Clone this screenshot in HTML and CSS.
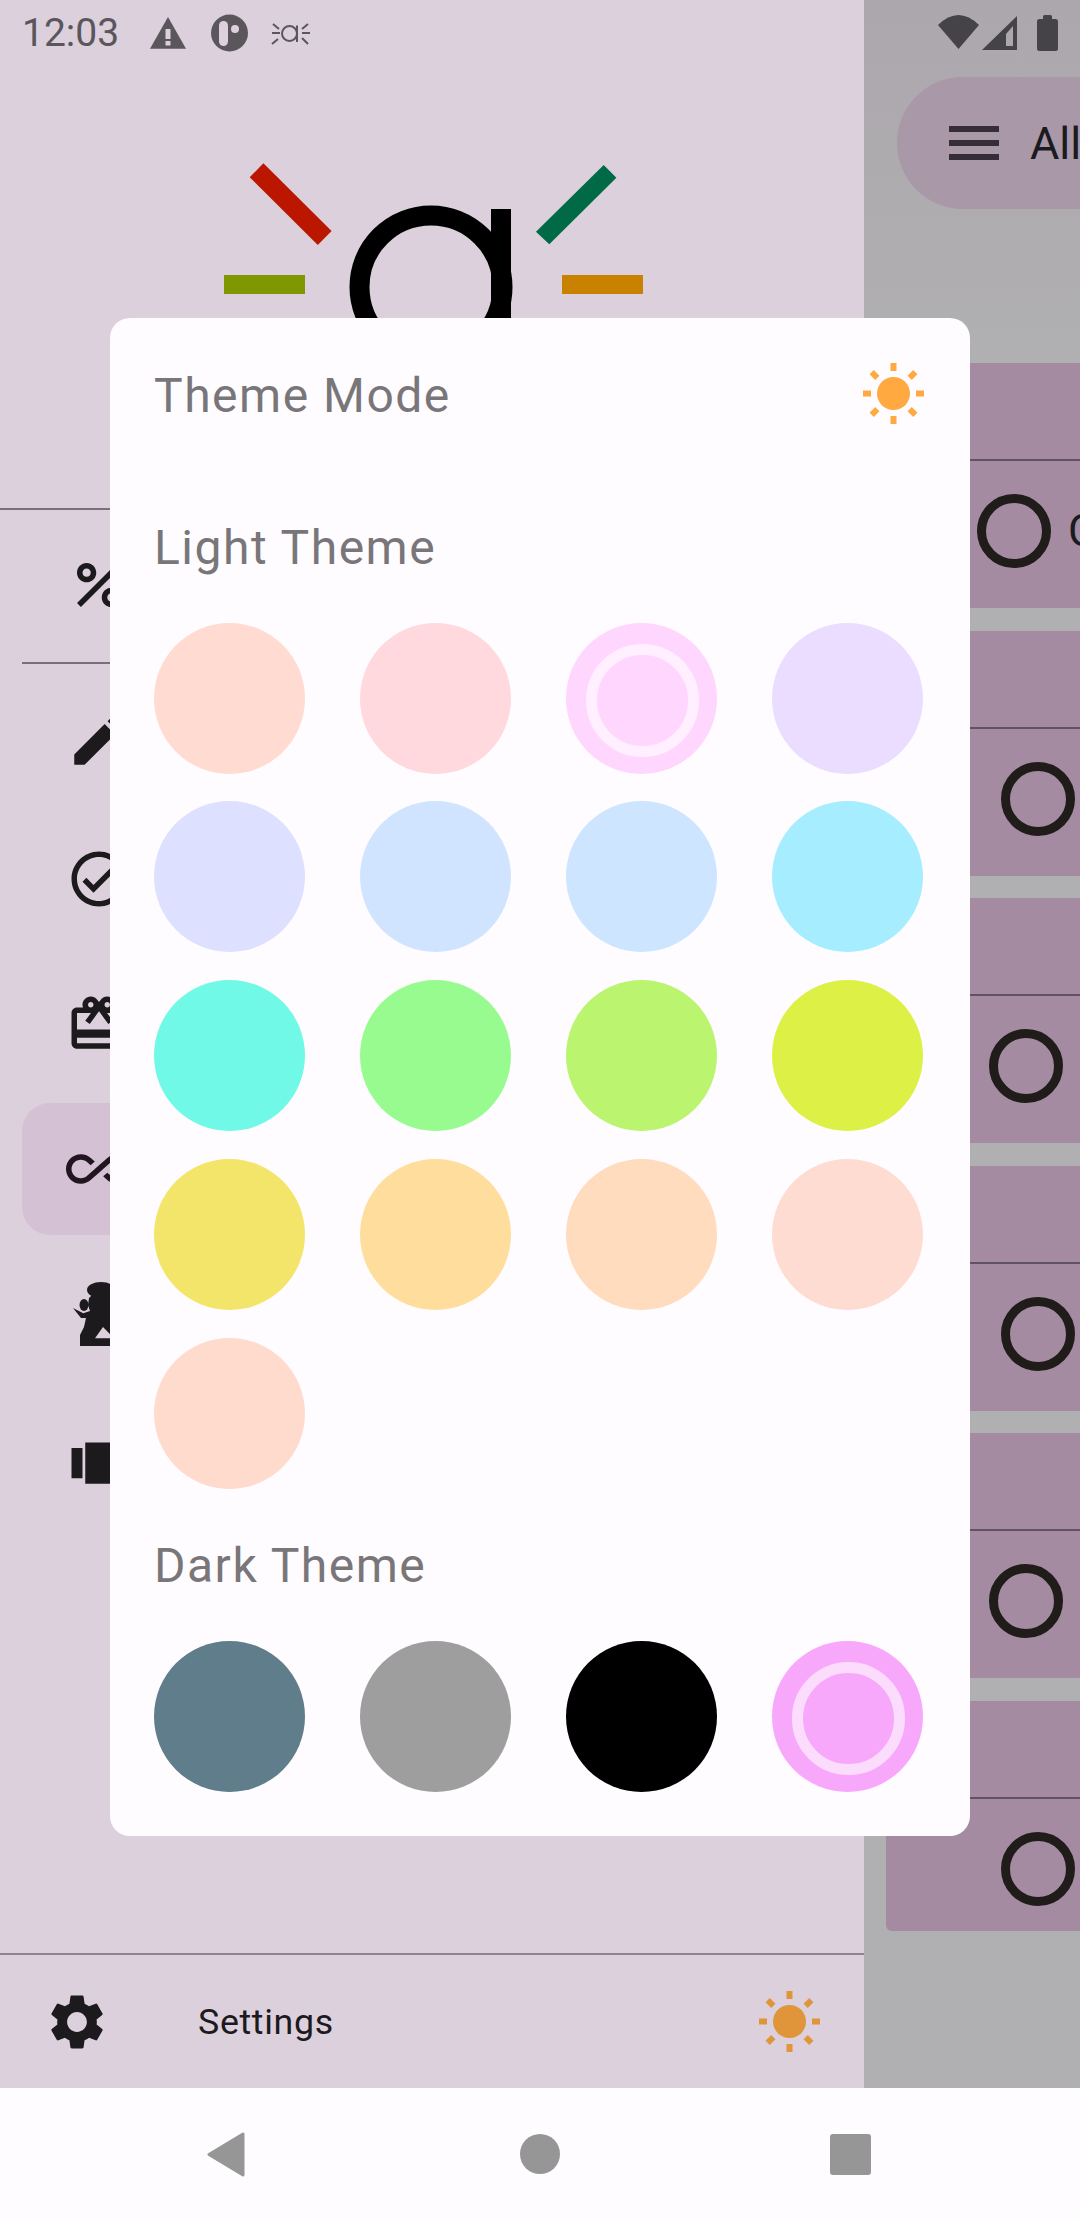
FILE: index.html
```html
<!DOCTYPE html>
<html lang="en">
<head>
  <meta charset="UTF-8" />
  <meta name="viewport" content="width=device-width, initial-scale=1.0"/>
  <title>Theme Mode</title>
  <link rel="stylesheet" href="styles.css">
</head>
<body>
  <svg class="defs" width="0" height="0">
    <symbol id="sun" viewBox="0 0 61 61">
      <circle cx="30.5" cy="30.5" r="16.5"/>
      <rect x="27.5" y="0" width="6" height="8"/>
      <rect x="27.5" y="53" width="6" height="8"/>
      <rect x="0" y="27.5" width="8" height="6"/>
      <rect x="53" y="27.5" width="8" height="6"/>
      <rect x="8.5" y="8" width="6" height="8" transform="rotate(-45 11.5 12)"/>
      <rect x="46.5" y="8" width="6" height="8" transform="rotate(45 49.5 12)"/>
      <rect x="8.5" y="45" width="6" height="8" transform="rotate(45 11.5 49)"/>
      <rect x="46.5" y="45" width="6" height="8" transform="rotate(-45 49.5 49)"/>
    </symbol>
  </svg>

  <div class="screen">
    <div class="app">
      <aside class="drawer">
        <div class="status-left">
          <span class="clock">12:03</span>
          <svg class="status-icons" width="164" height="44" viewBox="148 11 164 44">
            <path class="st-fill" d="M168 17 186 48.700H150Z" stroke-linejoin="round"/>
            <rect class="st-cut" x="165.500" y="29" width="5" height="10"/>
            <rect class="st-cut" x="165.500" y="41" width="5" height="4.500"/>
            <circle class="st-fill" cx="229.500" cy="33" r="18.500"/>
            <rect class="st-cut" x="219" y="21" width="9" height="25" rx="4.500"/>
            <circle class="st-cut" cx="235" cy="29" r="4"/>
            <g class="st-line">
              <circle cx="289.500" cy="33.500" r="7.500"/>
              <path d="M297 25.500V42M272 33h8M272 44l6-5M273 24l6 5M302 33h8M302 29l6-5M302 38l6 6"/>
            </g>
          </svg>
        </div>

        <div class="logo">
          <svg width="864" height="442" viewBox="0 66 864 442">
            <polygon fill="#bb1600" points="263.400,163.300 249.700,177.300 317.800,245 331.600,231"/>
            <polygon fill="#006a46" points="603.700,165 616.400,177.700 549.300,244.300 536,231.700"/>
            <rect fill="#7f9700" x="224" y="275" width="81" height="19"/>
            <rect fill="#c98200" x="562" y="275" width="81" height="19"/>
            <circle cx="431" cy="287" r="71.500" fill="none" stroke="#000" stroke-width="20"/>
            <rect x="491" y="209" width="20" height="160" fill="#000"/>
          </svg>
        </div>

        <div class="nav-top">
          <div class="nav-row">
            <svg class="nav-icon" viewBox="0 0 24 24"><path d="M7.500 11C9.430 11 11 9.430 11 7.500S9.430 4 7.500 4 4 5.570 4 7.500 5.570 11 7.500 11zm0-5C8.330 6 9 6.670 9 7.500S8.330 9 7.500 9 6 8.330 6 7.500 6.670 6 7.500 6zM4.003 18.588 18.588 4.003l1.414 1.414L5.417 20.002zM16.500 13c-1.930 0-3.500 1.570-3.500 3.500s1.570 3.500 3.500 3.500 3.500-1.570 3.500-3.500-1.570-3.500-3.500-3.500zm0 5c-.830 0-1.500-.670-1.500-1.500s.670-1.500 1.500-1.500 1.500.670 1.500 1.500-.670 1.500-1.500 1.500z"/></svg>
          </div>
        </div>

        <nav class="nav-list">
          <div class="nav-row">
            <svg class="nav-icon" viewBox="0 -2.200 24 24"><path d="M3 17.250V21h3.750L17.810 9.940l-3.750-3.750L3 17.250zM20.710 7.040a1 1 0 0 0 0-1.410l-2.340-2.340a1 1 0 0 0-1.410 0l-1.830 1.830 3.750 3.750 1.830-1.830z"/></svg>
          </div>
          <div class="nav-row">
            <svg class="nav-icon" viewBox="0 0 24 24"><path d="M12 2C6.480 2 2 6.480 2 12s4.480 10 10 10 10-4.480 10-10S17.520 2 12 2zm0 18c-4.410 0-8-3.590-8-8s3.590-8 8-8 8 3.590 8 8-3.590 8-8 8zm4.590-12.420L10 14.170l-2.590-2.580L6 13l4 4 8-8z"/></svg>
          </div>
          <div class="nav-row">
            <svg class="nav-icon" viewBox="0 0 24 24"><path d="M20 6h-2.180c.110-.310.180-.650.180-1 0-1.660-1.340-3-3-3-1.050 0-1.960.540-2.500 1.350l-.500.670-.500-.680C10.960 2.540 10.050 2 9 2 7.340 2 6 3.340 6 5c0 .350.070.690.180 1H4c-1.110 0-1.990.890-1.990 2L2 19c0 1.110.890 2 2 2h16c1.110 0 2-.890 2-2V8c0-1.110-.890-2-2-2zm-5-2c.550 0 1 .450 1 1s-.450 1-1 1-1-.450-1-1 .450-1 1-1zM9 4c.550 0 1 .450 1 1s-.450 1-1 1-1-.450-1-1 .450-1 1-1zm11 15H4v-2h16v2zm0-5H4V8h5.080L7 10.830 8.620 12 11 8.760l1-1.360 1 1.360L15.380 12 17 10.830 14.920 8H20v6z"/></svg>
          </div>
          <div class="nav-row active">
            <svg class="nav-icon" viewBox="0 0 24 24"><path d="M18.600 6.620c-1.440 0-2.800.560-3.770 1.530L12 10.660 10.480 12h.010L7.800 14.390c-.640.640-1.490.990-2.400.990-1.870 0-3.390-1.510-3.390-3.380S3.530 8.620 5.400 8.620c.910 0 1.760.350 2.440 1.030l1.130 1 1.510-1.340L9.220 8.200C8.200 7.180 6.840 6.620 5.400 6.620 2.420 6.620 0 9.040 0 12s2.420 5.380 5.400 5.380c1.440 0 2.800-.560 3.770-1.530l2.830-2.500.010.010L13.520 12h-.010l2.690-2.390c.640-.640 1.490-.990 2.400-.990 1.870 0 3.390 1.510 3.390 3.380s-1.520 3.380-3.390 3.380c-.900 0-1.760-.350-2.440-1.030l-1.140-1.010-1.510 1.340 1.270 1.120c1.020 1.010 2.370 1.570 3.820 1.570 2.980 0 5.400-2.410 5.400-5.380s-2.420-5.370-5.400-5.370z"/></svg>
          </div>
          <div class="nav-row">
            <svg class="nav-icon" viewBox="0 0 66 66">
              <ellipse cx="35" cy="9" rx="14" ry="8"/>
              <ellipse cx="18" cy="24" rx="4.500" ry="6"/>
              <path fill-rule="evenodd" d="M28 12 23 17 22 24 24 30 17.300 32.300 7 27 15 37 20 37 18 46 14 54V65H60V57L62 40 52 25 48 12ZM29 57.300 37 46 48 57.300Z"/>
            </svg>
          </div>
          <div class="nav-row">
            <svg class="nav-icon" viewBox="0 -2 24 24"><path d="M7 19h10V4H7v15zm-5-2h4V6H2v11zM18 6v11h4V6h-4z"/></svg>
          </div>
        </nav>

        <div class="settings">
          <svg class="nav-icon" viewBox="0 0 24 24"><path d="M19.140 12.940c.040-.300.060-.610.060-.940 0-.320-.020-.640-.070-.940l2.030-1.580a.490.490 0 0 0 .120-.610l-1.920-3.320a.488.488 0 0 0-.590-.220l-2.390.960c-.500-.380-1.030-.700-1.620-.940l-.360-2.540a.484.484 0 0 0-.480-.410h-3.840c-.240 0-.430.170-.470.410l-.360 2.540c-.590.240-1.130.570-1.620.940l-2.390-.960c-.220-.080-.470 0-.590.220L2.740 8.870c-.120.210-.080.470.120.610l2.030 1.580c-.050.300-.090.630-.090.940s.020.640.070.940l-2.030 1.580a.490.490 0 0 0-.120.610l1.920 3.320c.120.220.370.290.590.220l2.390-.960c.500.380 1.030.700 1.620.940l.360 2.540c.050.240.240.410.480.410h3.840c.240 0 .440-.170.470-.410l.360-2.540c.590-.240 1.130-.560 1.620-.940l2.390.960c.220.080.470 0 .590-.220l1.920-3.320c.120-.220.070-.470-.120-.610l-2.010-1.580zM12 15.600c-1.980 0-3.600-1.620-3.600-3.600s1.620-3.600 3.600-3.600 3.600 1.620 3.600 3.600-1.620 3.600-3.600 3.600z"/></svg>
          <span class="settings-label">Settings</span>
          <svg class="settings-sun"><use href="#sun"/></svg>
        </div>
      </aside>

      <section class="pane">
        <div class="status-right">
          <svg width="124" height="44" viewBox="936 11 124 44">
            <path class="sr-fill" d="M938 25Q958.500 5 979 25L958.500 49Z"/>
            <path class="sr-fill" d="M982 50 1017 16V50Z"/>
            <path class="sr-cut" d="M1006 46V34L1013 26V46Z"/>
            <path class="sr-fill" d="M1043 19V16.500Q1043 15 1044.500 15H1050.500Q1052 15 1052 16.500V19H1055.500Q1058 19 1058 21.500V48.500Q1058 51 1055.500 51H1039.500Q1037 51 1037 48.500V21.500Q1037 19 1039.500 19Z"/>
          </svg>
        </div>

        <div class="filter-pill">
          <svg class="menu-icon" width="50" height="34" viewBox="0 0 50 34">
            <rect width="50" height="6"/>
            <rect y="14" width="50" height="6"/>
            <rect y="28" width="50" height="6"/>
          </svg>
          <span>All</span>
        </div>

        <div class="cards">
          <div class="card depth-0"><div class="card-head"></div><div class="card-body"><span class="ring"></span><span class="card-text">C</span></div></div>
          <div class="card depth-2"><div class="card-head"></div><div class="card-body"><span class="ring"></span></div></div>
          <div class="card depth-1"><div class="card-head"></div><div class="card-body"><span class="ring"></span></div></div>
          <div class="card depth-2"><div class="card-head"></div><div class="card-body"><span class="ring"></span></div></div>
          <div class="card depth-1"><div class="card-head"></div><div class="card-body"><span class="ring"></span></div></div>
          <div class="card depth-2 last"><div class="card-head"></div><div class="card-body"><span class="ring"></span></div></div>
        </div>
      </section>
    </div>

    <div class="navbar">
      <svg class="nav-back" width="38" height="45" viewBox="0 0 38 45"><path d="M36 2V43L2 22.500Z"/></svg>
      <span class="nav-home"></span>
      <span class="nav-recent"></span>
    </div>

    <div class="dialog">
      <div class="dialog-head">
        <span class="dialog-title">Theme Mode</span>
        <svg class="dialog-sun"><use href="#sun"/></svg>
      </div>

      <h4 class="section-label light-label">Light Theme</h4>
      <div class="swatches">
        <span class="swatch s1"></span>
        <span class="swatch s2"></span>
        <span class="swatch s3 selected"></span>
        <span class="swatch s4"></span>
        <span class="swatch s5"></span>
        <span class="swatch s6"></span>
        <span class="swatch s7"></span>
        <span class="swatch s8"></span>
        <span class="swatch s9"></span>
        <span class="swatch s10"></span>
        <span class="swatch s11"></span>
        <span class="swatch s12"></span>
        <span class="swatch s13"></span>
        <span class="swatch s14"></span>
        <span class="swatch s15"></span>
        <span class="swatch s16"></span>
        <span class="swatch s17"></span>
      </div>

      <h4 class="section-label dark-label">Dark Theme</h4>
      <div class="swatches">
        <span class="swatch d1"></span>
        <span class="swatch d2"></span>
        <span class="swatch d3"></span>
        <span class="swatch d4 selected"></span>
      </div>
    </div>
  </div>
</body>
</html>
```

FILE: styles.css
```css
*, *::after {
  box-sizing: border-box;
}
body {
  margin: 0;
  font-family: Roboto, "Noto Sans", sans-serif;
  background-color: #fffcff;
}
.defs {
  position: absolute;
}
.screen {
  position: relative;
  width: 1080px;
  height: 2220px;
  overflow: hidden;
  display: flex;
  flex-direction: column;
}
.app {
  flex: 1;
  display: flex;
  min-height: 0;
}

/* drawer */
.drawer {
  width: 864px;
  background-color: #dbd0dc;
  display: flex;
  flex-direction: column;
}
.status-left {
  height: 66px;
  display: flex;
  align-items: center;
  padding-left: 22px;
}
.clock {
  width: 126px;
  font-size: 39px;
  color: #5a565b;
}
.st-fill {
  fill: #5a565b;
}
.st-cut {
  fill: #dbd0dc;
}
.st-line {
  fill: none;
  stroke: #5a565b;
  stroke-width: 2;
}
.logo {
  height: 442px;
}
.logo svg {
  display: block;
}
.nav-top {
  height: 156px;
  border-top: 2px solid #7b6f7c;
  border-bottom: 2px solid transparent;
  display: flex;
  align-items: center;
  position: relative;
}
.nav-top::after {
  content: "";
  position: absolute;
  left: 22px;
  right: 0;
  bottom: -2px;
  height: 2px;
  background-color: #7b6f7c;
}
.nav-top .nav-row {
  flex: 1;
  margin-top: -3px;
}
.nav-list {
  padding-top: 4px;
  display: flex;
  flex-direction: column;
  gap: 13px;
}
.nav-row {
  height: 132px;
  margin-left: 22px;
  padding-left: 44px;
  border-radius: 28px 0 0 28px;
  display: flex;
  align-items: center;
  color: #1c1a1c;
}
.nav-row.active {
  background-color: #d4c1d3;
  color: #211520;
}
.nav-icon {
  width: 66px;
  height: 66px;
  flex: none;
  fill: currentColor;
}
.settings {
  margin-top: auto;
  height: 135px;
  border-top: 2px solid #8f8490;
  padding: 0 44px;
  display: flex;
  align-items: center;
  color: #1c1a1c;
}
.settings-label {
  margin-left: 88px;
  font-size: 35.750px;
  letter-spacing: 0.650px;
}
.settings-sun {
  margin-left: auto;
  width: 61px;
  height: 61px;
  fill: #e0953a;
}

/* list behind the scrim */
.pane {
  flex: 1;
  min-width: 0;
  overflow: hidden;
  background: linear-gradient(#aca7ad, #b0afb1 340px);
}
.status-right {
  height: 66px;
  display: flex;
  align-items: center;
  padding-left: 72px;
}
.sr-fill {
  fill: #454347;
}
.sr-cut {
  fill: #aca7ad;
}
.filter-pill {
  margin: 11px 0 0 33px;
  height: 132px;
  padding-left: 52px;
  border-radius: 66px 0 0 66px;
  background-color: #a998a8;
  display: flex;
  align-items: center;
  gap: 31px;
  font-size: 45px;
  color: #1a1a1f;
  white-space: nowrap;
}
.menu-icon {
  flex: none;
  fill: #372d38;
}
.cards {
  margin: 154px 0 0 22px;
  display: flex;
  flex-direction: column;
  gap: 22.500px;
}
.card {
  height: 245px;
  background-color: #a48ba1;
  color: #1a1a1f;
  white-space: nowrap;
}
.card.last {
  height: 230px;
  border-radius: 0 0 0 6px;
}
.card-head {
  height: 98px;
  border-bottom: 2px solid #5f5262;
}
.card-body {
  padding-top: 33px;
  display: flex;
  align-items: center;
  gap: 17px;
  font-size: 44px;
}
.depth-0 .card-body {
  padding-left: 91px;
}
.depth-1 .card-body {
  padding-left: 103px;
}
.depth-2 .card-body {
  padding-left: 115px;
}
.ring {
  flex: none;
  width: 74px;
  height: 74px;
  border: 9px solid #1f1c1a;
  border-radius: 50%;
}

/* bottom system bar */
.navbar {
  height: 132px;
  flex: none;
  background-color: #fffcff;
  padding-left: 207px;
  display: flex;
  align-items: center;
}
.nav-back {
  fill: #969696;
  stroke: #969696;
  stroke-width: 3;
  stroke-linejoin: round;
}
.nav-home {
  margin-left: 275px;
  width: 40px;
  height: 40px;
  border-radius: 50%;
  background-color: #969696;
}
.nav-recent {
  margin-left: 270px;
  width: 41px;
  height: 41px;
  border-radius: 3px;
  background-color: #969696;
}

/* theme dialog */
.dialog {
  position: absolute;
  left: 110px;
  top: 318px;
  width: 860px;
  padding: 45px 46px 44.500px 44px;
  border-radius: 20px;
  background-color: #fffcff;
}
.dialog-head {
  display: flex;
  align-items: center;
  justify-content: space-between;
  height: 61px;
}
.dialog-title,
.section-label {
  font-size: 48px;
  font-weight: 400;
  letter-spacing: 1.500px;
  color: #79767a;
}
.dialog-title {
  padding-top: 3px;
}
.dialog-sun {
  width: 61px;
  height: 61px;
  fill: #ffa940;
}
.section-label {
  margin: 0;
  height: 52px;
  line-height: 52px;
}
.light-label {
  margin: 98px 0 48.500px;
}
.dark-label {
  margin: 51px 0 49px;
}
.swatches {
  display: grid;
  grid-template-columns: repeat(4, 151px);
  column-gap: 55px;
  row-gap: 27.750px;
}
.swatch {
  position: relative;
  width: 151px;
  height: 151px;
  border-radius: 50%;
}
.swatch.selected::after {
  content: "";
  position: absolute;
  left: 20px;
  top: 21px;
  width: 113px;
  height: 113px;
  border-radius: 50%;
  border: 11.500px solid rgba(255, 255, 255, 0.6);
}
.s1 { background-color: #ffdbd1; }
.s2 { background-color: #ffd9de; }
.s3 { background-color: #ffd6fe; }
.s4 { background-color: #ebddff; }
.s5 { background-color: #dee0ff; }
.s6 { background-color: #d1e4ff; }
.s7 { background-color: #cde5ff; }
.s8 { background-color: #a6eeff; }
.s9 { background-color: #70f9e6; }
.s10 { background-color: #98fb8f; }
.s11 { background-color: #bbf56f; }
.s12 { background-color: #dcf046; }
.s13 { background-color: #f3e56a; }
.s14 { background-color: #ffde9d; }
.s15 { background-color: #ffdcbd; }
.s16 { background-color: #ffdcd2; }
.s17 { background-color: #ffdbcd; }
.d1 { background-color: #607d8b; }
.d2 { background-color: #9e9e9e; }
.d3 { background-color: #000000; }
.d4 { background-color: #f8a8fb; }
```
